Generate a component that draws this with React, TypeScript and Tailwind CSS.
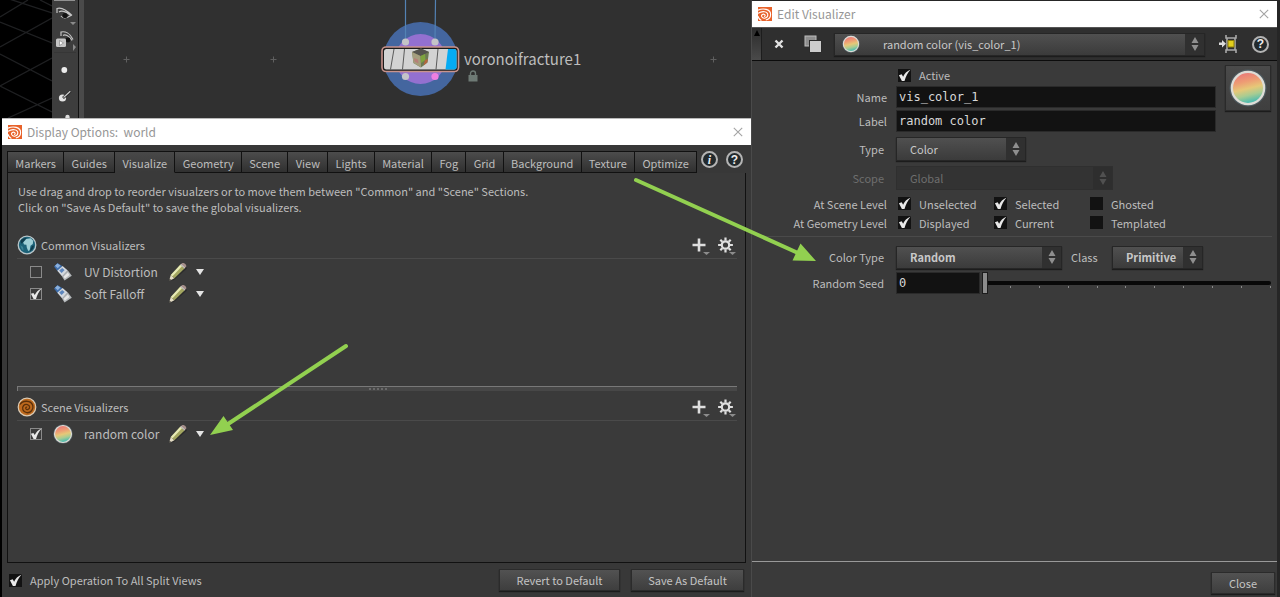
import React, { useState } from 'react';

const tabs = [
  'Markers', 'Guides', 'Visualize', 'Geometry', 'Scene', 'View', 'Lights',
  'Material', 'Fog', 'Grid', 'Background', 'Texture', 'Optimize',
];

const commonVisualizers = [
  { id: 'uv', name: 'UV Distortion', kind: 'tube', enabled: false },
  { id: 'falloff', name: 'Soft Falloff', kind: 'tube', enabled: true },
];

const sceneVisualizers = [
  { id: 'random', name: 'random color', kind: 'sphere', enabled: true },
];

const levels = [
  {
    label: 'At Scene Level',
    options: [
      { name: 'Unselected', on: true },
      { name: 'Selected', on: true },
      { name: 'Ghosted', on: false },
    ],
  },
  {
    label: 'At Geometry Level',
    options: [
      { name: 'Displayed', on: true },
      { name: 'Current', on: true },
      { name: 'Templated', on: false },
    ],
  },
];

const sliderTicks = [1, 2, 3, 4, 5, 6, 7, 8, 9, 10];

/* ---------- icons ---------- */

const Logo = () => (
  <svg viewBox="0 0 14 14" className="w-[14px] h-[14px] shrink-0">
    <rect width="14" height="14" fill="#e8622a" />
    <path d="M0 3.200C5 .8 12.600 2 12.600 7.400c0 3-2.400 5-4.800 5.600" fill="none" stroke="#fff" strokeWidth="1.100" />
    <path d="M0 6.400C4 3.600 9.800 4.200 9.800 8c0 3.200-4.600 4.400-6 1.800-.9-2 1.400-3.400 2.900-2.200.9.8.3 1.900-.6 1.800" fill="none" stroke="#fff" strokeWidth="1.100" />
    <path d="M0 9.200c.4 2 1.600 3.400 3.400 4.200" fill="none" stroke="#fff" strokeWidth="1.100" />
  </svg>
);

const CloseX = () => (
  <svg viewBox="0 0 10 10" className="w-[10px] h-[10px]">
    <path d="M.8.8l8.400 8.400M9.200.8L.8 9.200" stroke="#a4a4a4" strokeWidth="1.100" />
  </svg>
);

const Tick = ({ className }: { className: string }) => (
  <svg viewBox="0 0 14 14" className={className}>
    <path d="M1 6.800l3-1.100 1.500 2.600C7 5.200 9.400 2.300 13.600.6 10.400 4.200 8.400 8 7 12.800H4.200z" fill="#e8e8e8" />
  </svg>
);

const Sphere = ({ className }: { className: string }) => (
  <svg viewBox="0 0 40 40" className={className}>
    <defs>
      <linearGradient id="sphere" x1="0.35" y1="0" x2="0.6" y2="1">
        <stop offset="0.08" stopColor="#ea8078" />
        <stop offset="0.3" stopColor="#ee9c74" />
        <stop offset="0.52" stopColor="#e6c878" />
        <stop offset="0.72" stopColor="#a8cc92" />
        <stop offset="0.92" stopColor="#52bcae" />
      </linearGradient>
    </defs>
    <circle cx="20" cy="20" r="19.500" fill="#4f5c62" />
    <circle cx="20" cy="20" r="17" fill="url(#sphere)" stroke="#dedcd6" strokeWidth="2.400" />
  </svg>
);

const Tube = () => (
  <svg viewBox="0 0 20 20" className="w-5 h-5">
    <path d="M1 4.500L4.500 1l5 3.200-4.800 5z" fill="#3f6fae" />
    <path d="M2 3.800L4.400 1.600l3 2-2.600 2.700z" fill="#8db1dc" />
    <path d="M4.300 8.800L9.600 4l5.200 4.400-5.600 6z" fill="#d3d8de" />
    <path d="M6.200 8.600l3-2.600 2.400 2-3 3z" fill="#5d86bd" />
    <path d="M9 14.400l5.900-6 3.900 5.400-7.300 4.600z" fill="#b4b8bb" />
    <path d="M10.600 14.600l4.200-4 1.700 2.500-4.700 3.700z" fill="#e6e6e6" />
  </svg>
);

const Pencil = () => (
  <svg viewBox="0 0 20 20" className="w-5 h-5">
    <path d="M3.500 18.500L18 5l1 1.500L6 18z" fill="#222" opacity="0.6" />
    <path d="M1 19l1.800-6 3.600 3.200z" fill="#e4dcc4" />
    <path d="M1 19l.7-2.300 1.300 1.200z" fill="#1c1c1c" />
    <path d="M2.800 13L12.300 2.800l4.200 3.600-10.100 9.800z" fill="#a3a660" />
    <path d="M2.800 13L12.300 2.800l1.700 1.400-9.700 10.200z" fill="#e8ebb6" />
    <path d="M12.300 2.800l1.700-1.600c1.600-1 4.800 1.200 4.200 3.200l-1.700 2z" fill="#a68f8b" />
    <path d="M12.300 2.800l.8-.8 4.100 3.700-.7.700z" fill="#c9c9c4" />
  </svg>
);

const Globe = () => (
  <svg viewBox="0 0 20 20" className="w-5 h-5">
    <circle cx="10" cy="10" r="8.800" fill="#1d6278" stroke="#b9c6ca" strokeWidth="1.300" />
    <path d="M3.500 5.500C5 3.600 8 2.600 9.600 3L8 5.200 5.300 8l-1.200.4z" fill="#0f3c4d" />
    <path d="M12.500 16.500c2.500-1 4.300-3.200 4.500-6l-2 .5z" fill="#0f3c4d" />
    <path d="M6.200 7.500l3-3.500 4.500-.8 2.500 2.600-.4 3.200-2.300 1.800-.8 4.400-1.500.8-1.400-3.400-.4-2.800-2.400-.2z" fill="#9fcfd6" />
    <path d="M3.400 10l2.600 2 .6 3.600c-1.700-1-3-2.900-3.200-5.600z" fill="#3d8496" />
  </svg>
);

const Swirl = () => (
  <svg viewBox="0 0 20 20" className="w-5 h-5">
    <circle cx="10" cy="10" r="8.800" fill="#bd691d" stroke="#dccbb4" strokeWidth="1.200" />
    <path d="M3 7.500C5.500 3 14 3 15.800 8.500c1.200 4-2.400 7.600-6 7.200-4-.4-5.400-4.800-3.200-7.200 2.200-2.300 6-.9 6 1.800 0 2.200-2.900 3-3.700 1.400-.5-1.200.6-1.900 1.300-1.500" fill="none" stroke="#5b300a" strokeWidth="1.300" />
  </svg>
);

const Plus = () => (
  <svg viewBox="0 0 20 20" className="w-5 h-5">
    <path d="M8 3.500v13M1.500 10h13" stroke="#dedede" strokeWidth="2.600" />
    <path d="M12 17h7l-3.500 3z" fill="#8c8c8c" />
  </svg>
);

const Gear = () => (
  <svg viewBox="0 0 20 20" className="w-5 h-5">
    <circle cx="8.500" cy="10" r="3.700" fill="none" stroke="#dedede" strokeWidth="2.200" />
    <path
      d="M8.500 5.500V2.600M8.500 17.400v-2.900M4 10H1.100M15.900 10H13M5.300 6.800L3.300 4.800M13.700 15.200l-2-2M5.300 13.200l-2 2M13.700 4.800l-2 2"
      stroke="#dedede"
      strokeWidth="2.200"
    />
    <path d="M12 17h7l-3.500 3z" fill="#8c8c8c" />
  </svg>
);

const RoundGlyph = ({ glyph, italic }: { glyph: string; italic?: boolean }) => (
  <span
    className={`flex h-[17px] w-[17px] items-center justify-center rounded-full border-2 border-[#b4b4b4] bg-[#22292c] text-[12px] leading-none font-bold text-[#ededed] ${
      italic ? "italic font-['Liberation_Serif',serif]" : "font-['Liberation_Sans',sans-serif]"
    }`}
  >
    {glyph}
  </span>
);

const Copies = () => (
  <svg viewBox="0 0 18 18" className="w-[18px] h-[18px]">
    <rect x="1" y="1" width="11" height="10" fill="#8e8e8e" stroke="#bdbdbd" />
    <rect x="5.500" y="5.500" width="11.500" height="11.500" fill="#c9c9c9" stroke="#2b2b2b" />
    <rect x="6" y="6" width="11" height="11" fill="#cdcdcd" />
  </svg>
);

const NodeLink = () => (
  <svg viewBox="0 0 18 20" className="w-[18px] h-5">
    <path d="M7 1v3h10V1M7 19v-3h10v3M8 4v12M16 4v12" fill="none" stroke="#a9a9a9" strokeWidth="1.600" />
    <rect x="9" y="6.500" width="6" height="6.500" fill="#e3cf1c" stroke="#8c7d08" />
    <path d="M0 8.500h3V6l4 3.800-4 3.700V11H0z" fill="#dcdcdc" />
  </svg>
);

const Down = () => (
  <svg viewBox="0 0 8 6" className="w-2 h-[6px]">
    <path d="M0 0h8L4 6z" fill="#e4e4e4" />
  </svg>
);

/* ---------- form parts ---------- */

const DarkCheck = ({ id, on }: { id: string; on: boolean }) => (
  <span className="grid h-[13px] w-[13px] shrink-0">
    <input
      id={id}
      type="checkbox"
      defaultChecked={on}
      className="peer col-start-1 row-start-1 h-[13px] w-[13px] appearance-none bg-[#121212]"
    />
    <Tick className="pointer-events-none col-start-1 row-start-1 hidden h-[13px] w-[13px] peer-checked:block" />
  </span>
);

const OutlineCheck = ({ id, on }: { id: string; on: boolean }) => (
  <span className="grid h-3 w-3 shrink-0">
    <input
      id={id}
      type="checkbox"
      defaultChecked={on}
      className="peer col-start-1 row-start-1 h-3 w-3 appearance-none border border-[#8a8a8a]"
    />
    <Tick className="pointer-events-none col-start-1 row-start-1 hidden h-3 w-3 peer-checked:block" />
  </span>
);

type DropProps = {
  id: string;
  value: string;
  className: string;
  padding?: string;
  bold?: boolean;
  disabled?: boolean;
  label?: string;
};

const Drop = ({ id, value, className, padding = 'pl-[13px]', bold, disabled, label }: DropProps) => (
  <span
    className={`grid border ${className} ${
      disabled
        ? 'border-[#2f2f2f] bg-[#333333]'
        : 'border-[#262626] bg-linear-to-b from-[#505050] to-[#3b3b3b] shadow-[0_1px_1px_#1c1c1c]'
    }`}
  >
    <select
      id={id}
      disabled={disabled}
      aria-label={label}
      className={`col-start-1 row-start-1 w-full appearance-none bg-transparent text-[11px] leading-4 outline-none ${padding} ${
        bold ? 'font-bold' : ''
      } ${disabled ? 'text-[#6e6e6e]' : 'text-[#c8c8c8]'}`}
    >
      <option>{value}</option>
    </select>
    <span
      className={`pointer-events-none col-start-1 row-start-1 flex w-[19px] items-center justify-center justify-self-end ${
        disabled ? 'bg-[#2e2e2e]' : 'bg-[#303030]'
      }`}
    >
      <svg viewBox="0 0 8 14" className="w-2 h-[14px]">
        <path d="M4 0l3.500 6h-7zM4 14L.5 8h7z" fill={disabled ? '#505050' : '#8f8f8f'} />
      </svg>
    </span>
  </span>
);

const PushButton = ({ children, className }: { children: React.ReactNode; className: string }) => (
  <button
    className={`h-[22px] border border-[#2b2b2b] bg-linear-to-b from-[#525252] to-[#3e3e3e] text-[11px] leading-4 text-[#c4c4c4] shadow-[0_1px_1px_#1c1c1c] ${className}`}
  >
    {children}
  </button>
);

const TitleBar = ({ title }: { title: string }) => (
  <header className="flex h-[26px] items-center bg-white pr-2 pl-[6px]">
    <Logo />
    <h1 className="ml-[5px] flex-1 text-[12px] leading-4 font-normal whitespace-pre text-[#969696]">{title}</h1>
    <button aria-label="Close window">
      <CloseX />
    </button>
  </header>
);

/* ---------- background: viewport and network editor ---------- */

const Viewport = () => (
  <svg viewBox="0 0 52 118" preserveAspectRatio="none" className="h-full w-[52px] shrink-0 bg-black">
    <path
      d="M0 17L28 0M0 47L52 18M0 86L52 58M8 118L52 98M0 -4L52 13M0 22L52 43M0 54L52 81M0 86L52 112M40 0l12 6"
      fill="none"
      stroke="#1f2022"
      strokeWidth="1.300"
    />
  </svg>
);

const ToolStrip = () => (
  <div className="flex w-[27px] shrink-0 flex-col items-center border-r border-[#111] bg-[#3d3d3d]">
    <svg viewBox="0 0 26 118" className="w-[26px] h-[118px]">
      <path d="M2 .5h21" stroke="#909090" />
      <g fill="none" stroke="#c4c4c4" strokeWidth="1.200">
        <path d="M5 13V8.500C9 7 14 9.500 20 15.500M7 12c2-1.500 6-1 12 3.500-4 2.500-8 3-10 .5" />
        <path d="M9 36v-4c4-1 9 1 12 7.500M11 35.500c2-1.500 6 0 9 5" />
      </g>
      <circle cx="13" cy="15.500" r="2.600" fill="#111" />
      <path d="M18 22h6l-3 3zM21 44l3 3-3 4z" fill="#8a8a8a" />
      <circle cx="16" cy="40" r="2.400" fill="#111" />
      <rect x="4" y="38.500" width="10" height="8.500" rx="1.500" fill="#c6c6c6" />
      <path d="M7.500 40.500v5l4-2.500z" fill="#fff" stroke="#777" strokeWidth="0.600" />
      <path d="M2 52.500h22" stroke="#363636" />
      <circle cx="12.300" cy="70" r="2.900" fill="#ececec" />
      <circle cx="10.500" cy="98" r="3.600" fill="#e4e4e4" />
      <path d="M11 98l7.500-6.800" stroke="#222" strokeWidth="2.600" />
      <path d="M11.500 97.500l6.800-6.300" stroke="#c9c9c9" strokeWidth="1.300" />
      <circle cx="15.500" cy="117" r="2.200" fill="#dcdcdc" />
    </svg>
  </div>
);

const NetworkEditor = () => (
  <div className="relative flex-1 overflow-hidden border-l-[5px] border-[#4a4a4a] bg-[#303030]">
    <svg viewBox="84 0 667 118" className="absolute top-0 left-0 h-[118px] w-[667px]">
      <path d="M123.500 59.500h6M126.500 56.500v6M270.500 59.500h6M273.500 56.500v6M710.500 59.500h6M713.500 56.500v6" stroke="#5f5f5f" />
      <circle cx="420.500" cy="59" r="37" fill="#44669f" />
      <circle cx="420.500" cy="59" r="25" fill="#9370d0" />
      <path d="M405.500 0v40M435.500 0l-.5 40" fill="none" stroke="#5382b4" strokeWidth="1.200" />
      <g fill="#c4c4c8">
        <circle cx="405.500" cy="42" r="3.600" />
        <circle cx="435" cy="42" r="3.600" />
        <circle cx="405.500" cy="76.500" r="3.600" />
      </g>
      <circle cx="435" cy="76.500" r="3.600" fill="#ee7fe0" />
      <rect x="382" y="47" width="76.500" height="24.500" rx="4" fill="#1b1b1b" stroke="#c9938c" strokeWidth="1.600" />
      <rect x="384" y="49" width="72.500" height="20.500" rx="2.500" fill="#d3d3d3" />
      <path d="M448 49h6a2.500 2.500 0 0 1 2.500 2.500v15.500a2.500 2.500 0 0 1-2.500 2.500h-8.500z" fill="#06abf3" />
      <path d="M394 49l-3.500 20.500M404.500 49l-2 20.500M438 49l-2 20.500" stroke="#4d4d4d" strokeWidth="0.900" />
      <path d="M412 52l9-3.500 8 3.500-1.500 10.500-6.500 5-7.500-4.500z" fill="#6d7a52" />
      <path d="M412 52l9-3.500 8 3.500-8.500 4z" fill="#55534e" />
      <path d="M412 52l8.500 4 .5 11.500-7.500-4.500z" fill="#a59e7e" />
      <path d="M420.500 56l4.500-2 .5 6-4.500 3z" fill="#7ea33e" />
      <path d="M425 60l3-1-.8 3.500-3.700 3z" fill="#b5653d" />
      <path d="M414 58l4 1.500.5 4-4-2z" fill="#b77f78" />
    </svg>
    <span className="absolute top-[49px] left-[380px] text-[15px] leading-5 text-[#bdbdbd]">voronoifracture1</span>
    <svg viewBox="0 0 10 12" className="absolute top-[70px] left-[384px] w-[10px] h-3">
      <path d="M2.500 6V3.500a2.500 2.500 0 0 1 5 0V6" fill="none" stroke="#6e7a75" strokeWidth="1.400" />
      <rect x="0.500" y="5" width="9" height="6.500" fill="#6e7a75" />
    </svg>
  </div>
);

/* ---------- display options window ---------- */

const SectionHeader = ({ icon, title }: { icon: React.ReactNode; title: string }) => (
  <div className="flex h-[26px] items-center border-b border-[#4a4a4a] pb-[2px]">
    {icon}
    <h2 className="ml-1 flex-1 text-[11px] leading-4 font-normal">{title}</h2>
    <button aria-label={`Add to ${title}`}>
      <Plus />
    </button>
    <button aria-label={`${title} settings`} className="ml-[6px]">
      <Gear />
    </button>
  </div>
);

type Visualizer = { id: string; name: string; kind: string; enabled: boolean };

const VisualizerRow = ({ item }: { item: Visualizer }) => (
  <li className="flex h-[22px] items-center pl-[13px]">
    <OutlineCheck id={item.id} on={item.enabled} />
    <span className="mx-[11px] flex w-5 justify-center">
      {item.kind === 'sphere' ? <Sphere className="w-5 h-5" /> : <Tube />}
    </span>
    <label htmlFor={item.id} className="w-[84px] text-[12px] leading-5 whitespace-nowrap">
      {item.name}
    </label>
    <button aria-label={`Edit ${item.name}`}>
      <Pencil />
    </button>
    <button aria-label={`${item.name} menu`} className="ml-2">
      <Down />
    </button>
  </li>
);

const DisplayOptions = () => {
  const [active, setActive] = useState('Visualize');

  return (
    <section className="ml-[2px] flex flex-1 flex-col border-t border-[#b8b8b8] bg-[#383838]">
      <TitleBar title="Display Options:  world" />

      <div className="flex flex-1 flex-col px-[5px] pt-[6px]">
        <div className="flex items-start">
          <nav role="tablist" className="flex flex-1 border-t border-l border-[#111]">
            {tabs.map((tab) => (
              <button
                key={tab}
                role="tab"
                aria-selected={tab === active}
                onClick={() => setActive(tab)}
                className={`h-[21px] grow border-r border-b border-r-[#111] px-[6px] pt-px text-[11px] leading-5 whitespace-nowrap ${
                  tab === active
                    ? 'border-b-[#3a3a3a] bg-linear-to-b from-[#484848] to-[#3a3a3a]'
                    : 'border-b-[#111] bg-linear-to-b from-[#4c4c4c] to-[#303030]'
                }`}
              >
                {tab}
              </button>
            ))}
          </nav>
          <div className="flex gap-2 pr-[3px] pl-1">
            <button aria-label="Info"><RoundGlyph glyph="i" italic /></button>
            <button aria-label="Help"><RoundGlyph glyph="?" /></button>
          </div>
        </div>

        <div className="flex flex-1 flex-col border-x border-b border-[#111] bg-[#3a3a3a] pr-2 pl-[9px]">
          <p className="mt-[10px] ml-[1px] text-[11px] leading-[16px]">
            Use drag and drop to reorder visualzers or to move them between "Common" and "Scene" Sections.
            <br />
            Click on "Save As Default" to save the global visualizers.
          </p>

          <div className="mt-[18px] min-h-[153px]">
            <SectionHeader icon={<Globe />} title="Common Visualizers" />
            <ul className="pt-[2px]">
              {commonVisualizers.map((item) => (
                <VisualizerRow key={item.id} item={item} />
              ))}
            </ul>
          </div>

          <div className="flex h-[5px] items-center justify-center border-t border-l border-[#787878] bg-[#474747]">
            <span className="w-[18px] border-t-2 border-dotted border-[#6a6a6a]" />
          </div>

          <div className="mt-1">
            <SectionHeader icon={<Swirl />} title="Scene Visualizers" />
            <ul className="pt-[2px]">
              {sceneVisualizers.map((item) => (
                <VisualizerRow key={item.id} item={item} />
              ))}
            </ul>
          </div>
        </div>

        <footer className="flex h-[34px] items-center">
          <div className="ml-[2px] flex flex-1 items-center gap-2">
            <DarkCheck id="apply-all" on />
            <label htmlFor="apply-all" className="text-[11px] leading-4">
              Apply Operation To All Split Views
            </label>
          </div>
          <PushButton className="w-[121px]">Revert to Default</PushButton>
          <PushButton className="mr-[2px] ml-[11px] w-[113px]">Save As Default</PushButton>
        </footer>
      </div>
    </section>
  );
};

/* ---------- edit visualizer window ---------- */

const fieldLabel = 'w-[135px] shrink-0 text-right text-[11px] leading-4';
const textBox =
  "h-[22px] w-full border border-[#2a2a2a] bg-[#121212] px-[2px] font-['DejaVu_Sans_Mono','Liberation_Mono',monospace] text-[12px] text-[#d8d8d8] outline-none";

const EditVisualizer = () => (
  <section className="flex flex-col border-t border-r-[3px] border-l border-[#262626] border-l-[#4a4a4a] bg-[#3a3a3a]">
    <TitleBar title="Edit Visualizer" />

    <div className="flex h-[34px] items-center border-t border-b border-t-[#555] border-b-[#0c0c0c] bg-[#2f2f2f] pr-2">
      <span className="flex h-full w-[10px] items-start justify-center border-r border-[#1d1d1d] bg-linear-to-b from-[#2c2c2c] to-[#4a4a4a] pt-[2px]">
        <svg viewBox="0 0 6 6" className="w-[6px] h-[6px]"><path d="M3 0l3 6H0z" fill="#000" /></svg>
      </span>
      <button aria-label="Delete" className="ml-3">
        <svg viewBox="0 0 10 10" className="w-[10px] h-[10px]">
          <path d="M1.500 1.500l7 7M8.500 1.500l-7 7" stroke="#e2e2e2" strokeWidth="2.400" />
        </svg>
      </button>
      <button aria-label="Duplicate" className="ml-5"><Copies /></button>
      <div className="ml-3 grid flex-1">
        <div className="col-start-1 row-start-1 grid">
          <Drop id="picker" label="Visualizer" value="random color (vis_color_1)" className="h-[23px]" padding="pl-[48px]" />
        </div>
        <Sphere className="pointer-events-none col-start-1 row-start-1 ml-2 h-[18px] w-[18px] self-center" />
      </div>
      <button aria-label="Select node" className="ml-[14px]"><NodeLink /></button>
      <button aria-label="Help" className="ml-[15px]"><RoundGlyph glyph="?" /></button>
    </div>

    <form className="flex flex-1 flex-col">
      <div className="flex pr-[6px]">
        <div className="flex-1">
          <div className="flex h-[24px] items-center gap-2 pt-1 pl-[146px]">
            <DarkCheck id="active" on />
            <label htmlFor="active" className="text-[11px] leading-4">Active</label>
          </div>
          <div className="flex h-[24px] items-center gap-[9px]">
            <label htmlFor="name" className={fieldLabel}>Name</label>
            <input id="name" defaultValue="vis_color_1" className={textBox} />
          </div>
          <div className="flex h-[24px] items-center gap-[9px]">
            <label htmlFor="label" className={fieldLabel}>Label</label>
            <input id="label" defaultValue="random color" className={textBox} />
          </div>
        </div>
        <button
          type="button"
          aria-label="Icon"
          className="mt-1 ml-[9px] flex h-[46px] w-[46px] items-center justify-center border border-[#2a2a2a] bg-linear-to-b from-[#4a4a4a] to-[#3f3f3f] shadow-[0_1px_1px_#1c1c1c]"
        >
          <Sphere className="h-[38px] w-[38px]" />
        </button>
      </div>

      <div className="mt-1 flex h-[24px] items-center gap-[9px]">
        <label htmlFor="type" className={`${fieldLabel} pr-[3px]`}>Type</label>
        <Drop id="type" value="Color" className="h-[24px] w-[130px]" />
      </div>
      <div className="mt-[5px] flex h-[24px] items-center gap-[9px]">
        <label htmlFor="scope" className={`${fieldLabel} pr-[3px] text-[#6e6e6e]`}>Scope</label>
        <Drop id="scope" value="Global" disabled className="h-[24px] w-[217px]" />
      </div>

      <div className="mt-1">
        {levels.map((row) => (
          <div key={row.label} role="group" aria-label={row.label} className="flex h-[19px] items-center gap-[11px]">
            <span className={fieldLabel}>{row.label}</span>
            <div className="flex">
              {row.options.map((option) => (
                <span key={option.name} className="flex w-[96px] items-center gap-2">
                  <DarkCheck id={option.name} on={option.on} />
                  <label htmlFor={option.name} className="text-[11px] leading-4">{option.name}</label>
                </span>
              ))}
            </div>
          </div>
        ))}
      </div>

      <hr className="mx-[5px] mt-1 border-[#4a4a4a]" />

      <div className="mt-2 flex h-[24px] items-center gap-[9px]">
        <label htmlFor="color-type" className={`${fieldLabel} pr-[3px]`}>Color Type</label>
        <Drop id="color-type" value="Random" bold className="h-[23px] w-[166px]" />
        <label htmlFor="class" className="w-7 text-[11px] leading-4">Class</label>
        <Drop id="class" value="Primitive" bold className="ml-1 h-[23px] w-[91px]" />
      </div>
      <div className="mt-[2px] flex h-[24px] items-center pr-[6px]">
        <label htmlFor="seed" className={`${fieldLabel} mr-[9px] pr-[3px]`}>Random Seed</label>
        <span className="w-[84px] shrink-0"><input id="seed" defaultValue="0" className={`${textBox} block`} /></span>
        <div className="ml-[2px] grid flex-1">
          <input
            type="range"
            aria-label="Random Seed slider"
            min="0"
            max="10"
            defaultValue="0"
            className="col-start-1 row-start-1 h-[22px] w-full appearance-none bg-transparent [&::-webkit-slider-runnable-track]:h-1 [&::-webkit-slider-runnable-track]:rounded-full [&::-webkit-slider-runnable-track]:bg-[#080808] [&::-webkit-slider-thumb]:-mt-[9px] [&::-webkit-slider-thumb]:h-[22px] [&::-webkit-slider-thumb]:w-[6px] [&::-webkit-slider-thumb]:appearance-none [&::-webkit-slider-thumb]:border [&::-webkit-slider-thumb]:border-[#1c1c1c] [&::-webkit-slider-thumb]:bg-[#8c8c8c]"
          />
          <div className="pointer-events-none col-start-1 row-start-1 grid grid-cols-10 pt-[14px]">
            {sliderTicks.map((tick) => (
              <span key={tick} className="h-[2px] w-px justify-self-end bg-[#8a8a8a]" />
            ))}
          </div>
        </div>
      </div>

      <footer className="mt-auto flex h-[36px] items-center justify-end border-t border-[#999] pt-[8px] pr-[2px] pb-[2px]">
        <PushButton className="w-[64px]">Close</PushButton>
      </footer>
    </form>
  </section>
);

const Arrows = () => (
  <svg viewBox="0 0 1280 597" className="pointer-events-none absolute top-0 left-0 w-full">
    <g stroke="#92d050" strokeWidth="4" strokeLinecap="round">
      <path d="M636 180L798 253" />
      <path d="M346 346L228 424" />
    </g>
    <path d="M800.500 243.500l15.500 17.500-23.500-.5zM223.500 416l9.500 14-23 5z" fill="#92d050" />
  </svg>
);

export default function App() {
  return (
    <div className="relative grid min-h-screen grid-cols-[minmax(0,751fr)_minmax(0,529fr)] bg-black font-['Noto_Sans_CJK_SC','Noto_Sans',sans-serif] text-[#bdbdbd]">
      <div className="flex flex-col">
        <div className="flex h-[118px]">
          <Viewport />
          <ToolStrip />
          <NetworkEditor />
        </div>
        <DisplayOptions />
      </div>
      <EditVisualizer />
      <Arrows />
    </div>
  );
}
